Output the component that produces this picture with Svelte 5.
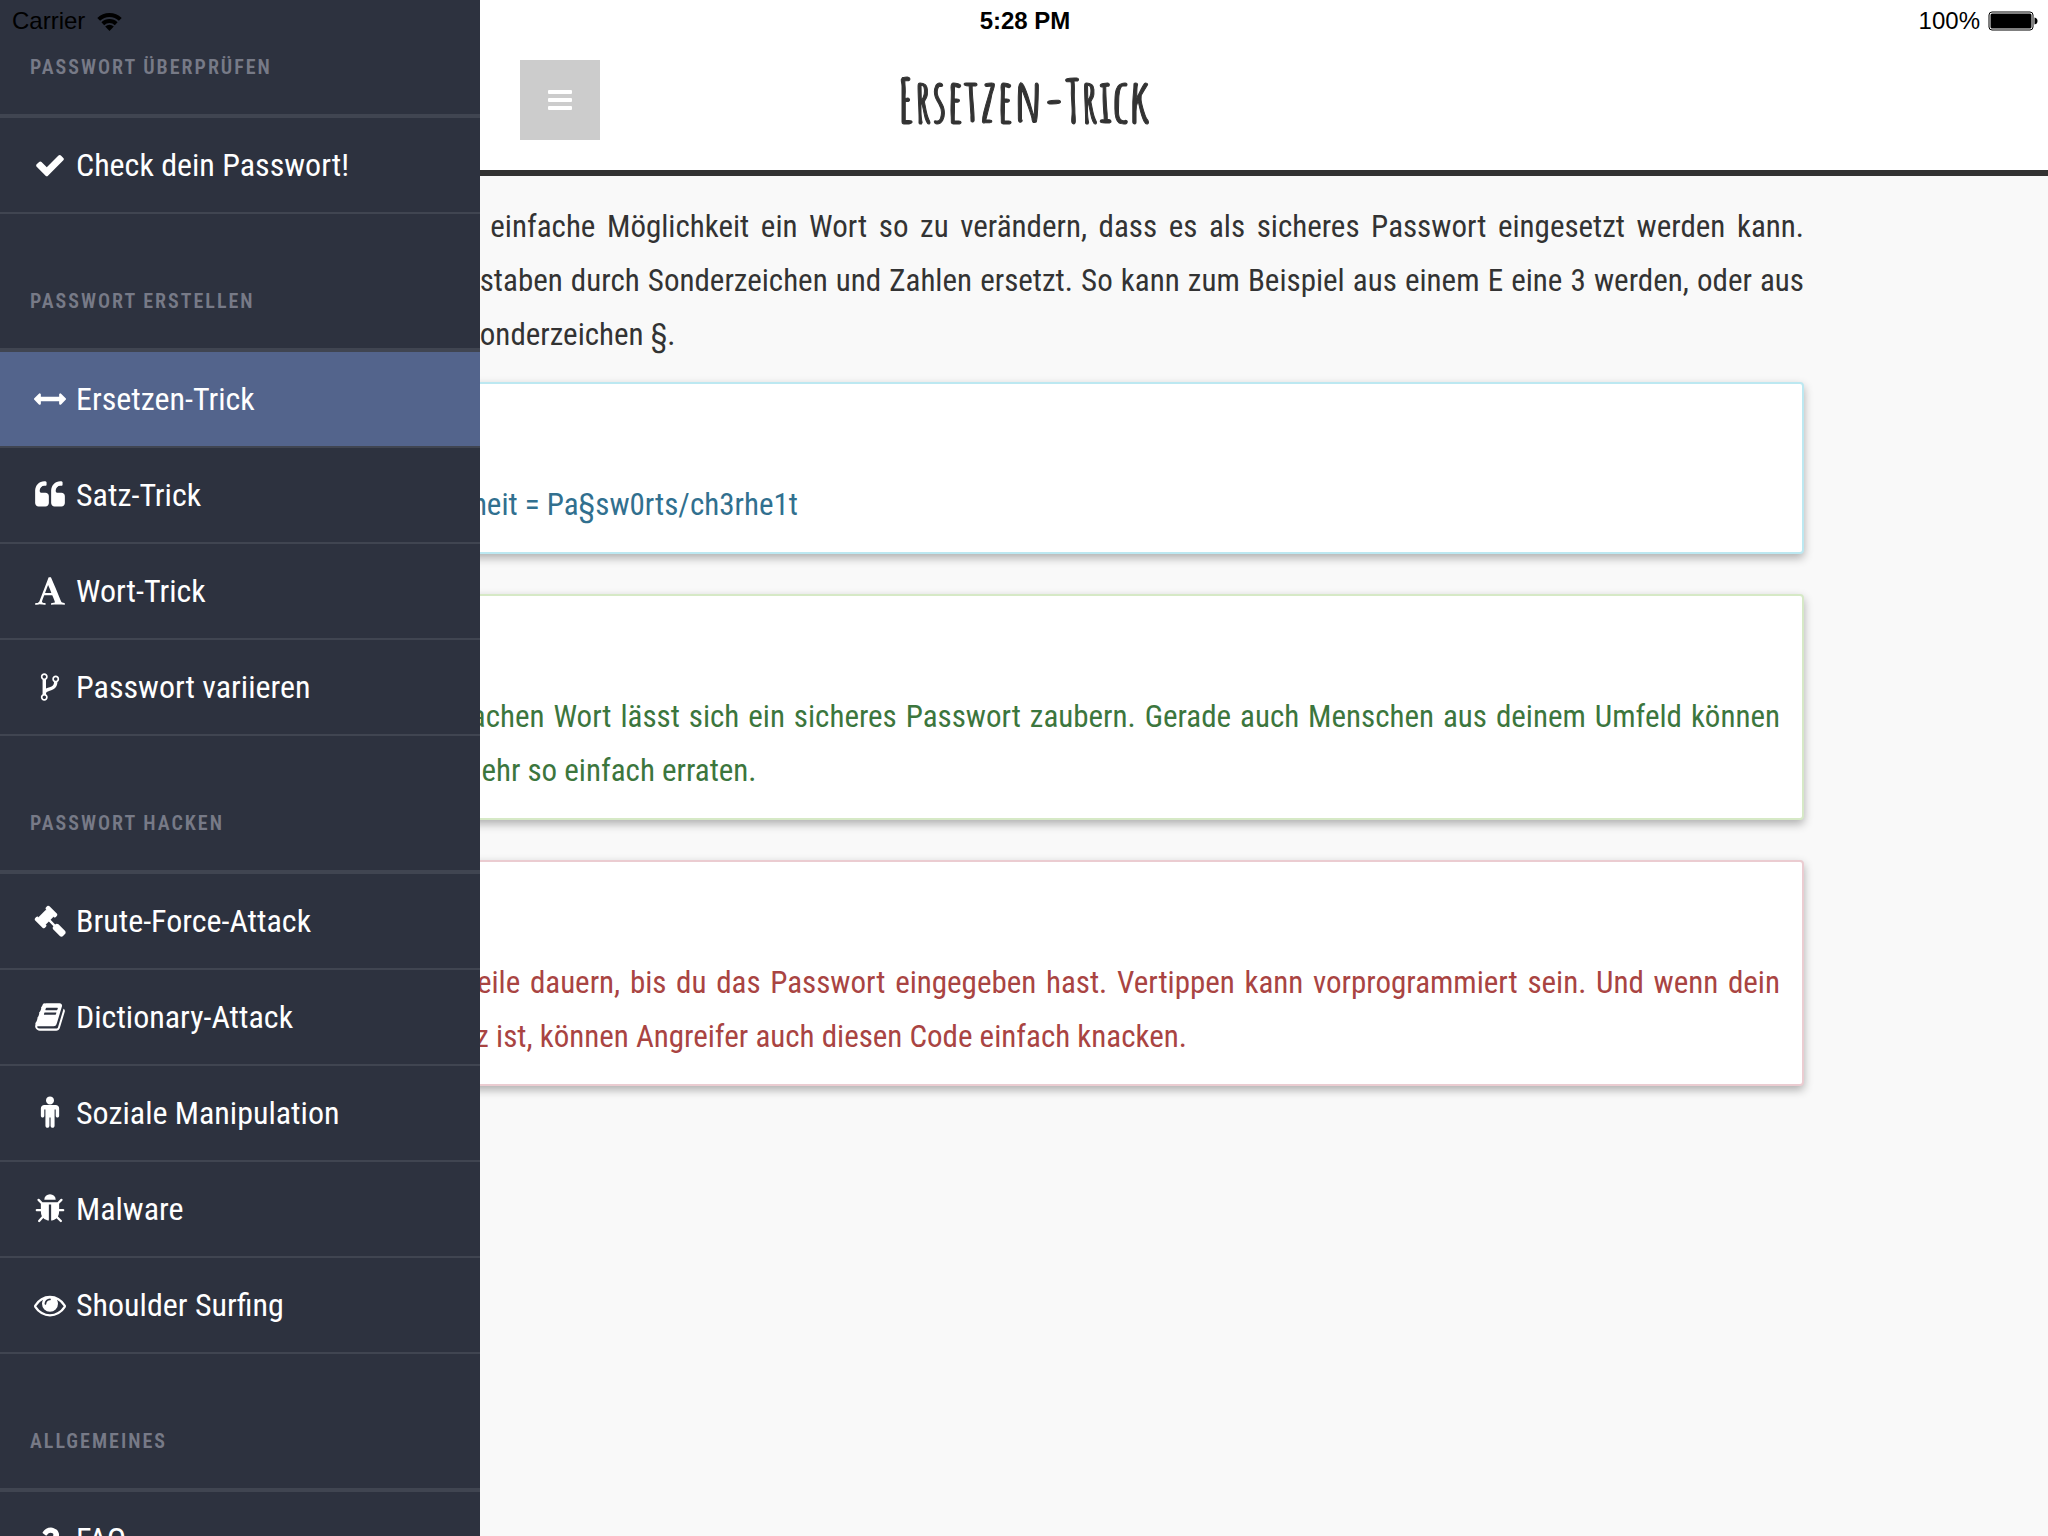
<script>
  const icons = {
    check: "M1671 566q0 40-28 68l-724 724-136 136q-28 28-68 28t-68-28l-136-136-362-362q-28-28-28-68t28-68l136-136q28-28 68-28t68 28l294 295 656-657q28-28 68-28t68 28l136 136q28 28 28 68z",
    arrows: "M1792 896q0 26-19 45l-256 256q-19 19-45 19t-45-19-19-45v-128h-1024v128q0 26-19 45t-45 19-45-19l-256-256q-19-19-19-45t19-45l256-256q19-19 45-19t45 19 19 45v128h1024v-128q0-26 19-45t45-19 45 19l256 256q19 19 19 45z",
    quote: "M832 960v384q0 80-56 136t-136 56h-384q-80 0-136-56t-56-136v-704q0-104 40.5-198.5t109.5-163.5 163.5-109.5 198.5-40.5h64q26 0 45 19t19 45v128q0 26-19 45t-45 19h-64q-106 0-181 75t-75 181v32q0 40 28 68t68 28h224q80 0 136 56t56 136zm896 0v384q0 80-56 136t-136 56h-384q-80 0-136-56t-56-136v-704q0-104 40.5-198.5t109.5-163.5 163.5-109.5 198.5-40.5h64q26 0 45 19t19 45v128q0 26-19 45t-45 19h-64q-106 0-181 75t-75 181v32q0 40 28 68t68 28h224q80 0 136 56t56 136z",
    font: "M789 559l-170 450q33 0 136.5 2t160.5 2q19 0 57-2-87-253-184-452zm-725 1105l2-79q23-7 56-12.5t57-10.5 49.5-14.5 44.5-29 31-50.5l237-616 280-724h128q8 14 11 21l205 480q33 78 106 257.5t114 274.5q15 34 58 144.5t72 168.5q20 45 35 57 19 15 88 29.5t84 20.5q6 38 6 57 0 4-.5 13.5t-.5 13.5q-63 0-190-8t-191-8q-76 0-215 7t-178 8q0-43 4-78l131-28q1 0 12.5-2.5t15.5-3.5 14.5-4.5 15-6.5 11-8 9-11 2.5-14q0-16-31-96.5t-72-177.5-42-100l-450-2q-26 58-76.5 195.5t-50.5 162.5q0 22 14 37.5t43.5 24.5 48.5 13.5 57 8.5 41 4q1 19 1 58 0 9-2 27-58 0-174.5-10t-174.5-10q-8 0-26.5 4t-21.5 4q-80 14-188 14z",
    fork: "M672 1472q0-40-28-68t-68-28-68 28-28 68 28 68 68 28 68-28 28-68zm0-1152q0-40-28-68t-68-28-68 28-28 68 28 68 68 28 68-28 28-68zm640 128q0-40-28-68t-68-28-68 28-28 68 28 68 68 28 68-28 28-68zm96 0q0 52-26 96.5t-70 69.5q-2 287-226 414-67 38-203 81-128 40-169.5 71t-41.5 100v26q44 25 70 69.5t26 96.5q0 80-56 136t-136 56-136-56-56-136q0-52 26-96.5t70-69.5v-820q-44-25-70-69.5t-26-96.5q0-80 56-136t136-56 136 56 56 136q0 52-26 96.5t-70 69.5v497q54-26 154-57 55-17 87.5-29.5t70.5-31 59-39.5 40.5-51 28-69.5 8.5-91.5q-44-25-70-69.5t-26-96.5q0-80 56-136t136-56 136 56 56 136z",
    gavel: "M1771 1536q0 53-37 90l-107 108q-39 37-91 37-53 0-90-37l-363-364q-38-36-38-90 0-53 43-96l-256-256-126 126q-14 14-34 14t-34-14q2 2 12.5 12t12.5 13 10 11.5 10 13.5 6 13.5 5.5 16.5 1.5 18q0 38-28 68-3 3-16.5 18t-19 20.5-18.5 16.5-22 15.5-22 9-26 4.5q-40 0-68-28l-408-408q-28-28-28-68 0-13 4.5-26t9-22 15.5-22 16.5-18.5 20.5-19 18-16.5q30-28 68-28 10 0 18 1.5t16.5 5.5 13.5 6 13.5 10 11.5 10 13 12.5 12 12.5q-14-14-14-34t14-34l348-348q14-14 34-14t34 14q-2-2-12.5-12t-12.5-13-10-11.5-10-13.5-6-13.5-5.5-16.5-1.5-18q0-38 28-68 3-3 16.5-18t19-20.5 18.5-16.5 22-15.5 22-9 26-4.5q40 0 68 28l408 408q28 28 28 68 0 13-4.5 26t-9 22-15.5 22-16.5 18.5-20.5 19-18 16.5q-30 28-68 28-10 0-18-1.5t-16.5-5.5-13.5-6-13.5-10-11.5-10-13-12.5-12-12.5q14 14 14 34t-14 34l-126 126 256 256q43-43 96-43 52 0 91 37l363 363q37 39 37 91z",
    book: "M1703 478q40 57 18 129l-275 906q-19 64-76.5 107.5t-122.5 43.5h-923q-77 0-148.5-53.5t-99.5-131.5q-24-67-2-127 0-4 3-27t4-37q1-8-3-21.5t-3-19.5q2-11 8-21t16.5-23.5 16.5-23.5q23-38 45-91.5t30-91.5q3-10 .5-30t-.5-28q3-11 17-28t17-23q21-36 42-92t25-90q1-9-2.5-32t.5-28q4-13 22-30.5t22-22.5q19-26 42.5-84.5t27.5-96.5q1-8-3-25.5t-2-26.5q2-8 9-18t18-23 17-21q8-12 16.5-30.5t15-35 16-36 19.5-32 26.5-23.5 36-11.5 47.5 5.5l-1 3q38-9 51-9h761q74 0 114 56t18 130l-274 906q-36 119-71.5 153.5t-128.5 34.5h-869q-27 0-38 15-11 16-1 43 24 70 144 70h923q29 0 56-15.5t35-41.5l300-987q7-22 5-57 38 15 59 43zm-1064 2q-4 13 2 22.5t20 9.5h608q13 0 25.5-9.5t16.5-22.5l21-64q4-13-2-22.5t-20-9.5h-608q-13 0-25.5 9.5t-16.5 22.5zm-83 256q-4 13 2 22.5t20 9.5h608q13 0 25.5-9.5t16.5-22.5l21-64q4-13-2-22.5t-20-9.5h-608q-13 0-25.5 9.5t-16.5 22.5z",
    male: "M1408 640v416q0 40-28 68t-68 28-68-28-28-68v-352h-64v912q0 46-33 79t-79 33-79-33-33-79v-464h-64v464q0 46-33 79t-79 33-79-33-33-79v-912h-64v352q0 40-28 68t-68 28-68-28-28-68v-416q0-80 56-136t136-56h640q80 0 136 56t56 136zm-288-448q0 93-65.5 158.5t-158.5 65.5-158.5-65.5-65.5-158.5 65.5-158.5 158.5-65.5 158.5 65.5 65.5 158.5z",
    bug: "M1696 960q0 26-19 45t-45 19h-224q0 171-67 290l208 209q19 19 19 45t-19 45q-18 19-45 19t-45-19l-198-197q-5 5-15 13t-42 28.5-65 36.5-82 29-97 13v-896h-128v896q-51 0-101.5-13.5t-87-33-66-39-43.5-32.5l-15-14-183 207q-20 21-48 21-24 0-43-16-19-18-20.5-44.5t15.5-46.5l202-227q-58-114-58-274h-224q-26 0-45-19t-19-45 19-45 45-19h224v-294l-173-173q-19-19-19-45t19-45 45-19 45 19l173 173h844l173-173q19-19 45-19t45 19 19 45-19 45l-173 173v294h224q26 0 45 19t19 45zm-480-576h-640q0-133 93.5-226.5t226.5-93.5 226.5 93.5 93.5 226.5z",
    eye: "M1664 960q-152-236-381-353 61 104 61 225 0 185-131.5 316.5t-316.5 131.5-316.5-131.5-131.5-316.5q0-121 61-225-229 117-381 353 133 205 333.5 326.5t434.5 121.5 434.5-121.5 333.5-326.5zm-720-384q0-20-14-34t-34-14q-125 0-214.5 89.5t-89.5 214.5q0 20 14 34t34 14 34-14 14-34q0-86 61-147t147-61q20 0 34-14t14-34zm848 384q0 34-20 69-140 230-376.5 368.5t-499.5 138.5-499.5-139-376.5-368q-20-35-20-69t20-69q140-229 376.5-368t499.5-139 499.5 139 376.5 368q20 35 20 69z",
    question: "M1088 1256v240q0 16-12 28t-28 12h-240q-16 0-28-12t-12-28v-240q0-16 12-28t28-12h240q16 0 28 12t12 28zm316-600q0 54-15.5 101t-35 76.5-55 59.5-57.5 43.5-61 35.5q-41 23-68.5 65t-27.5 67q0 17-12 32.5t-28 15.5h-240q-15 0-25.5-18.5t-10.5-37.5v-45q0-83 65-156.5t143-108.5q59-27 84-56t25-76q0-42-46.5-74t-107.5-32q-65 0-108 29-35 25-107 115-13 16-31 16-12 0-25-8l-164-125q-13-10-15.5-25t5.5-28q160-266 464-266 80 0 161 31t146 83 106 127.5 41 158.5z"
  };

  const sections = [
    { title: "Passwort überprüfen", items: [["check", "Check dein Passwort!"]] },
    {
      title: "Passwort erstellen",
      items: [
        ["arrows", "Ersetzen-Trick"],
        ["quote", "Satz-Trick"],
        ["font", "Wort-Trick"],
        ["fork", "Passwort variieren"]
      ]
    },
    {
      title: "Passwort hacken",
      items: [
        ["gavel", "Brute-Force-Attack"],
        ["book", "Dictionary-Attack"],
        ["male", "Soziale Manipulation"],
        ["bug", "Malware"],
        ["eye", "Shoulder Surfing"]
      ]
    },
    { title: "Allgemeines", items: [["question", "FAQ"]] }
  ];

  const intro = [
    "Der Ersatz ist eine einfache Möglichkeit ein Wort so zu verändern, dass es als sicheres Passwort eingesetzt werden kann.",
    "Dabei werden Buchstaben durch Sonderzeichen und Zahlen ersetzt. So kann zum Beispiel aus einem E eine 3 werden, oder aus",
    "einem ss wird ein Sonderzeichen §."
  ];

  const cards = [
    { kind: "info", title: "Beispiel", lines: ["Passwortssicherheit = Pa§sw0rts/ch3rhe1t"] },
    {
      kind: "good",
      title: "Vorteile",
      lines: [
        "Aus einem schwachen Wort lässt sich ein sicheres Passwort zaubern. Gerade auch Menschen aus deinem Umfeld können",
        "Passwort nicht mehr so einfach erraten."
      ]
    },
    {
      kind: "bad",
      title: "Nachteile",
      lines: [
        "Das kann eine Weile dauern, bis du das Passwort eingegeben hast. Vertippen kann vorprogrammiert sein. Und wenn dein",
        "Passwort nur kurz ist, können Angreifer auch diesen Code einfach knacken."
      ]
    }
  ];

  let active = $state("Ersetzen-Trick");
</script>

<div class="screen">
  <div class="status">
    <span class="carrier">
      Carrier
      <svg class="wifi" viewBox="0 0 25 19" aria-hidden="true">
        <path d="M1.700 7.400a15.500 15.500 0 0 1 21.600 0" />
        <path d="M5.800 11.700a9.700 9.700 0 0 1 13.400 0" />
        <path class="dot" d="M12.500 19 8.200 14.600a6 6 0 0 1 8.600 0z" />
      </svg>
    </span>
    <span class="clock">5:28 PM</span>
    <span class="power">
      100%
      <svg class="battery" viewBox="0 0 50 20" aria-hidden="true">
        <rect class="shell" x="1" y="1" width="44" height="18" rx="3" />
        <rect x="2.500" y="2.500" width="41" height="15" rx="1.500" />
        <path d="M46.500 6.500q3 .5 3 3.500t-3 3.500z" />
      </svg>
    </span>
  </div>

  <nav class="sidebar" aria-label="Menü">
    {#each sections as section}
      <h2>{section.title}</h2>
      <ul>
        {#each section.items as [icon, label]}
          <li>
            <a href="#top" class:active={active === label} onclick={() => (active = label)}>
              <svg class="icon" viewBox="0 0 1792 1792" aria-hidden="true"><path d={icons[icon]} /></svg>
              {label}
            </a>
          </li>
        {/each}
      </ul>
    {/each}
  </nav>

  <header>
    <button class="toggle" aria-label="Menü">
      <svg viewBox="0 0 24 20" aria-hidden="true">
        <rect width="24" height="4" rx="1" />
        <rect y="8" width="24" height="4" rx="1" />
        <rect y="16" width="24" height="4" rx="1" />
      </svg>
    </button>
    <h1>Ersetzen-Trick</h1>
  </header>

  <main>
    <p class="text">
      {#each intro as line}<span class="line">{line}</span>{/each}
    </p>
    {#each cards as card}
      <section class="card {card.kind}">
        <h3>{card.title}</h3>
        <p class="text">
          {#each card.lines as line}<span class="line">{line}</span>{/each}
        </p>
      </section>
    {/each}
  </main>
</div>

<style>
  :global(body) {
    margin: 0;
    background: #f9f9f9;
  }

  .screen {
    --menu: 480px;
    position: relative;
    min-height: 100vh;
    overflow: hidden;
    font-family: "Roboto Condensed", Roboto, sans-serif;
    color: #333;
  }

  h1, h2, h3, p, ul {
    margin: 0;
    padding: 0;
    font-weight: 400;
  }

  .status {
    position: absolute;
    inset: 0 0 auto;
    z-index: 3;
    display: grid;
    grid-template-columns: 1fr auto 1fr;
    align-items: center;
    padding: 0 10px 0 12px;
    font: 24px/42px "Liberation Sans", Arial, sans-serif;
    color: #000;
  }

  .carrier, .power {
    display: flex;
    align-items: center;
    gap: 12px;
  }

  .power {
    justify-content: flex-end;
    gap: 8px;
  }

  .clock {
    font-weight: 700;
  }

  .wifi {
    width: 25px;
    height: 19px;
    fill: none;
    stroke: #000;
    stroke-width: 4;
  }

  .wifi .dot {
    fill: #000;
    stroke: none;
  }

  .battery {
    width: 50px;
    height: 20px;
  }

  .battery .shell {
    fill: none;
    stroke: #000;
    stroke-width: 1;
  }

  .sidebar {
    position: absolute;
    inset: 0 auto 0 0;
    z-index: 2;
    width: var(--menu);
    overflow: hidden;
    background: #2d323f;
  }

  .sidebar h2 {
    height: 134px;
    padding: 0 30px;
    border-bottom: 4px solid #404551;
    font-size: 20px;
    font-weight: 600;
    line-height: 174px;
    letter-spacing: 2px;
    text-transform: uppercase;
    color: #777a87;
  }

  .sidebar h2:first-child {
    margin-top: -20px;
  }

  ul {
    list-style: none;
  }

  .sidebar a {
    display: flex;
    align-items: center;
    gap: 10px;
    height: 94px;
    padding-left: 34px;
    border-bottom: 2px solid #404551;
    font-size: 32px;
    color: #fff;
    text-decoration: none;
  }

  .sidebar a.active {
    background: #53648c;
  }

  .icon {
    width: 32px;
    height: 32px;
    overflow: visible;
    fill: #fff;
  }

  header {
    display: grid;
    grid-template-columns: 1fr auto 1fr;
    align-items: center;
    height: 140px;
    padding-top: 30px;
    border-bottom: 6px solid #333;
    background: #fff;
  }

  .toggle {
    display: grid;
    place-items: center;
    width: 80px;
    height: 80px;
    margin-left: calc(var(--menu) + 40px);
    padding: 0;
    border: 0;
    background: #ccc;
  }

  .toggle svg {
    width: 24px;
    height: 20px;
    fill: #fff;
  }

  h1 {
    font: 700 60px/76px "Amatic SC", "Roboto Condensed", sans-serif;
    -webkit-text-stroke: 1px #333;
  }

  main {
    max-width: 1560px;
    margin: 0 auto;
    padding: 24px 0;
  }

  .text, h3 {
    font-size: 31px;
    line-height: 54px;
  }

  .line {
    display: block;
    text-align: justify;
    text-align-last: justify;
  }

  .line:last-child {
    text-align-last: left;
  }

  .card {
    margin: 20px 0 40px;
    padding: 20px 22px;
    border: 2px solid;
    border-radius: 4px;
    background: #fff;
    box-shadow: 0 4px 10px rgba(0, 0, 0, 0.3);
  }

  h3 {
    margin-bottom: 20px;
  }

  .info {
    border-color: #bce8f1;
    color: #31708f;
  }

  .good {
    border-color: #d6e9c6;
    color: #3c763d;
  }

  .bad {
    border-color: #ebccd1;
    color: #a94442;
  }
</style>
